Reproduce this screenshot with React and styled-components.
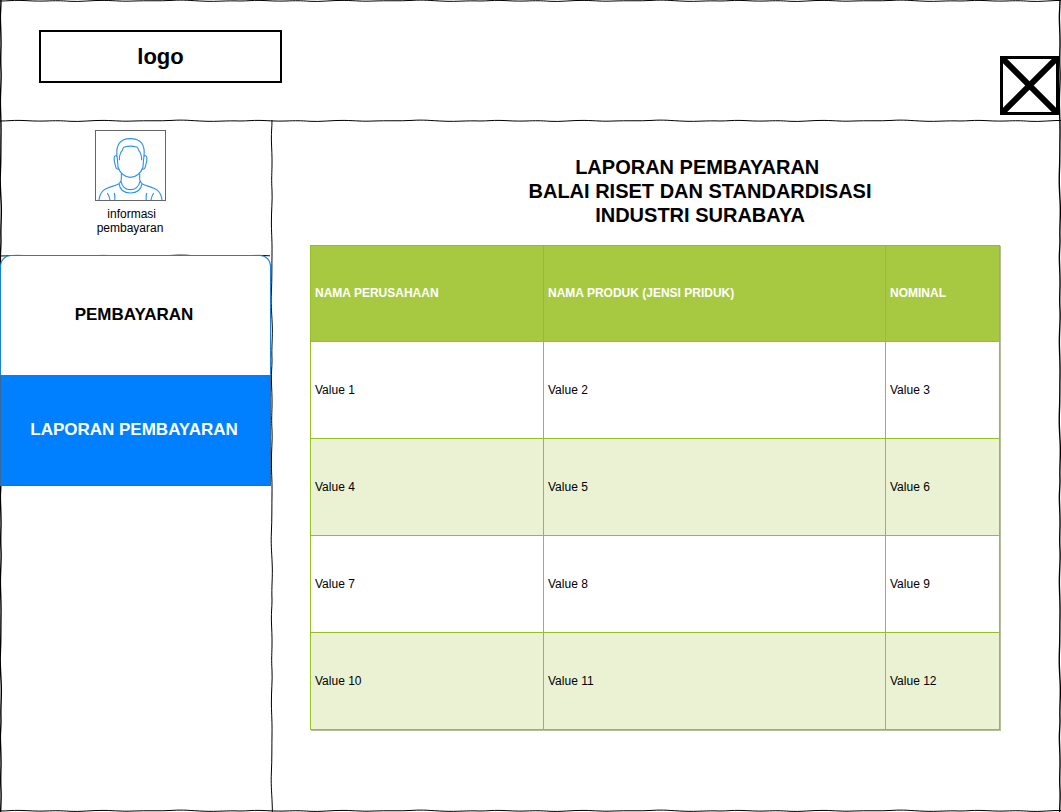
import React, { useId } from "react";
import styled, { createGlobalStyle, css } from "styled-components";

const GlobalStyle = createGlobalStyle`
  *, *::before, *::after { box-sizing: border-box; }
  body {
    margin: 0;
    background: #fff;
    color: #000;
    font-family: "Liberation Sans", Arial, Helvetica, sans-serif;
    font-size: 12px;
  }
`;

const Page = styled.div`
  position: relative;
  display: flex;
  flex-direction: column;
  min-height: 100vh;
`;

const Header = styled.header`
  display: flex;
  align-items: flex-start;
  justify-content: space-between;
  height: 119px;
  padding: 30px 2px 0 39px;
`;

const Logo = styled.div`
  display: flex;
  align-items: center;
  justify-content: center;
  width: 243px;
  height: 53px;
  border: 2px solid #000;
  font-size: 22px;
  font-weight: bold;
`;

const CloseButton = styled.button`
  width: 59px;
  height: 59px;
  margin-top: 26px;
  padding: 0;
  border: 3px solid #000;
  background: #fff;
  cursor: pointer;

  svg { display: block; width: 100%; height: 100%; }
`;

const Body = styled.div`
  display: flex;
  flex: 1;
`;

const Sidebar = styled.aside`
  display: flex;
  flex-direction: column;
  width: 270px;
  flex-shrink: 0;
`;

const Profile = styled.div`
  display: flex;
  flex-direction: column;
  align-items: center;
  gap: 6px;
  height: 131px;
  padding: 7px 10px 0 0;
  text-align: center;
  line-height: 14px;
`;

const Avatar = styled.svg`
  width: 71px;
  height: 71px;
  border: 1px solid #666;
`;

const Caption = styled.p`
  margin: 0;
`;

const Nav = styled.nav`
  position: relative;
  z-index: 1;
  display: flex;
  flex-direction: column;
  width: 271px;
  margin-top: -3px;
`;

const NavLink = styled.a`
  display: flex;
  align-items: center;
  justify-content: center;
  padding-right: 3px;
  font-size: 17px;
  font-weight: bold;
  text-decoration: none;
  ${({ $active }) =>
    $active
      ? css`
          height: 111px;
          padding-bottom: 2px;
          border: 1px solid #36699c;
          border-top-color: #007fff;
          background: #007fff;
          color: #fff;
        `
      : css`
          height: 120px;
          padding-bottom: 2px;
          border: 1px solid #1a7fd8;
          border-bottom: 0;
          border-radius: 11px 11px 0 0;
          background: #fff;
          color: #000;
        `}
`;

const Main = styled.main`
  flex: 1;
  min-width: 0;
  padding: 32px 61px 80px 36px;
`;

const Title = styled.h1`
  margin: 0 0 18px;
  padding-left: 90px;
  font-size: 20px;
  line-height: 24px;
  text-align: center;
`;

const Table = styled.table`
  width: 100%;
  table-layout: fixed;
  border-collapse: collapse;
  box-shadow: 1px 1px 0 #b4bf9a;
`;

const Col = styled.col`
  width: ${({ $width }) => $width};
`;

const Row = styled.tr`
  height: ${({ $head }) => ($head ? "96px" : "97px")};
  background: ${({ $shaded }) => ($shaded ? "#eaf2d3" : "#fff")};
`;

const cell = css`
  padding: 0 4px;
  border: 1px solid #98bf21;
  text-align: left;
  vertical-align: middle;
`;

const HeadCell = styled.th`
  ${cell}
  padding-bottom: 2px;
  background: #a7c942;
  color: #fff;
`;

const Cell = styled.td`
  ${cell}
`;

const RuleSvg = styled.svg`
  display: block;
  flex-shrink: 0;
  pointer-events: none;
  ${({ $vertical }) =>
    $vertical
      ? "width: 4px; margin-top: -3px; align-self: stretch;"
      : "width: 100%; height: 4px;"}
  ${({ $edge }) =>
    $edge &&
    css`
      position: absolute;
      margin: 0;
      ${$edge}: -1px;
      ${$edge === "left" || $edge === "right" ? "top: 0; height: 100%;" : "left: 0;"}
    `}
`;

const HORIZONTAL =
  "M0 2 C8 2 12 1.2 20 1.4 S36 2.4 46 2 S60 1.6 70 2.3 S92 1.2 104 1.4 S122 2.6 134 2 S160 2.2 172 1.4 S190 1.6 204 2.2 S226 1.4 240 2";
const VERTICAL =
  "M2 0 C2 8 1.2 12 1.4 20 S2.2 36 2 46 S1.4 60 2 70 S1.2 92 1.4 104 S2.2 122 2 134 S2 160 1.4 172 S1.6 190 2.2 204 S1.4 226 2 240";

function SketchRule({ vertical, edge, weight = 1 }) {
  const id = useId();
  return (
    <RuleSvg $vertical={vertical} $edge={edge} aria-hidden="true">
      <defs>
        <pattern
          id={id}
          width={vertical ? 4 : 240}
          height={vertical ? 240 : 4}
          patternUnits="userSpaceOnUse"
        >
          <path
            d={vertical ? VERTICAL : HORIZONTAL}
            fill="none"
            stroke="#000"
            strokeWidth={weight}
          />
        </pattern>
      </defs>
      <rect width="100%" height="100%" fill={`url(#${id})`} />
    </RuleSvg>
  );
}

function Person() {
  return (
    <Avatar viewBox="12 9 207 207" role="img" aria-label="Foto pengguna">
      <g fill="none" stroke="#2f92f2" strokeWidth="3.4" strokeLinejoin="round">
        <path d="M75 86 C71 50 84 32 115 32 C147 32 160 50 156 86" />
        <path d="M82 97 C82 82 85 73 91 67 Q93 59 97 57 Q115 52 134 57 Q138 59 140 67 C146 73 149 82 149 97" />
        <path d="M75 84 C77 96 77 107 78 117 C84 136 99 148 115 148 C132 148 147 136 153 117 C154 107 154 96 156 84" />
        <path d="M75 83 C65 79 64 95 70 112 C72 122 75 125 81 123" />
        <path d="M156 83 C166 79 167 95 161 112 C159 122 156 125 150 123" />
        <path d="M88 137 V154 C88 160 86 163 81 167 M143 137 V154 C143 160 145 163 150 167" />
        <path d="M87 160 C91 178 102 185 115 185 C129 185 140 178 144 160" />
        <path d="M81 167 C84 188 98 195 115 195 C133 195 147 188 150 167" />
        <path d="M81 167 C60 180 25 174 21 217 M150 167 C171 180 206 174 210 217" />
        <path d="M46 195 C51 203 53 209 54 217 M185 195 C180 203 178 209 177 217" />
        <path d="M67 195 C69 202 69 209 68 217 M164 195 C162 202 162 209 163 217" />
      </g>
    </Avatar>
  );
}

const columns = [
  { label: "NAMA PERUSAHAAN", width: "233px" },
  { label: "NAMA PRODUK (JENSI PRIDUK)", width: "auto" },
  { label: "NOMINAL", width: "114px" },
];

const rows = [
  ["Value 1", "Value 2", "Value 3"],
  ["Value 4", "Value 5", "Value 6"],
  ["Value 7", "Value 8", "Value 9"],
  ["Value 10", "Value 11", "Value 12"],
];

export default function App() {
  return (
    <>
      <GlobalStyle />
      <Page>
        <Header>
          <Logo>logo</Logo>
          <CloseButton type="button" aria-label="Tutup">
            <svg viewBox="0 0 53 53" aria-hidden="true">
              <path d="M0 0 L53 53 M53 0 L0 53" stroke="#000" strokeWidth="6" />
            </svg>
          </CloseButton>
        </Header>
        <SketchRule />
        <Body>
          <Sidebar>
            <Profile>
              <Person />
              <Caption>
                &nbsp;informasi
                <br />
                pembayaran
              </Caption>
            </Profile>
            <SketchRule />
            <Nav>
              <NavLink href="#pembayaran">PEMBAYARAN</NavLink>
              <NavLink href="#laporan" $active aria-current="page">
                LAPORAN PEMBAYARAN
              </NavLink>
            </Nav>
          </Sidebar>
          <SketchRule vertical />
          <Main>
            <Title>
              LAPORAN PEMBAYARAN&nbsp;
              <br />
              BALAI RISET DAN STANDARDISASI
              <br />
              INDUSTRI SURABAYA
            </Title>
            <Table>
              <colgroup>
                {columns.map((c) => (
                  <Col key={c.label} $width={c.width} />
                ))}
              </colgroup>
              <thead>
                <Row $head>
                  {columns.map((c) => (
                    <HeadCell key={c.label} scope="col">
                      {c.label}
                    </HeadCell>
                  ))}
                </Row>
              </thead>
              <tbody>
                {rows.map((row, i) => (
                  <Row key={row[0]} $shaded={i % 2 === 1}>
                    {row.map((value) => (
                      <Cell key={value}>{value}</Cell>
                    ))}
                  </Row>
                ))}
              </tbody>
            </Table>
          </Main>
        </Body>
        <SketchRule edge="top" />
        <SketchRule edge="bottom" />
        <SketchRule vertical edge="left" weight={1.4} />
        <SketchRule vertical edge="right" weight={1.4} />
      </Page>
    </>
  );
}
